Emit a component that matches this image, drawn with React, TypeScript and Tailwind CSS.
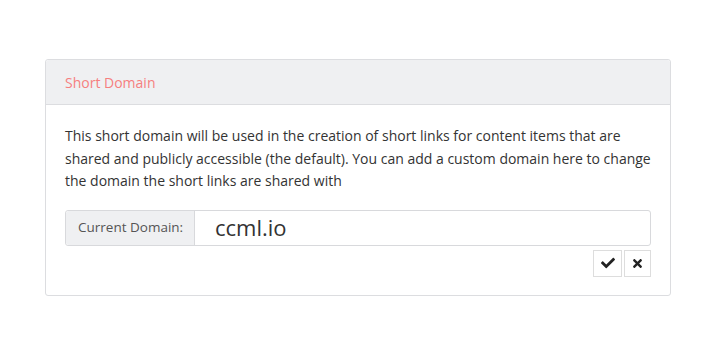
import { FaCheck, FaTimes } from "react-icons/fa"

function ShortDomainPanel() {
  return (
    <div className="rounded-[3px] border border-[#dcdde0] bg-white">
      <div className="h-[45px] flex items-center px-[19px] bg-[#eff0f2] border-b border-[#dcdde0] rounded-t-[3px]">
        <h3 className="text-[14px] text-[#f67f7f]">Short Domain</h3>
      </div>
      <div className="px-[19px] pt-[20px] pb-[18px]">
        <p className="text-[14px] leading-[22.5px] text-[#333]">
          This short domain will be used in the creation of short links for content items that are shared and publicly
          accessible (the default). You can add a custom domain here to change the domain the short links are shared with
        </p>
        <div className="mt-[17px] flex h-[36px] rounded-[3px] border border-[#d8d9dc]">
          <span className="w-[129px] shrink-0 flex items-center px-[12px] whitespace-nowrap bg-[#eff0f2] border-r border-[#d8d9dc] text-[13.5px] text-[#555] rounded-l-[3px]">
            Current Domain:
          </span>
          <input
            defaultValue="ccml.io"
            className="flex-1 min-w-0 px-[20px] text-[22px] text-[#333] outline-none rounded-r-[3px]"
          />
        </div>
        <div className="mt-[4px] flex justify-end gap-[2px]">
          <button className="w-[29px] h-[27px] flex items-center justify-center border border-[#ddd] bg-white text-[#222]">
            <FaCheck size={14} />
          </button>
          <button className="w-[27px] h-[27px] flex items-center justify-center border border-[#ddd] bg-white text-[#222]">
            <FaTimes size={13} />
          </button>
        </div>
      </div>
    </div>
  )
}

export default function App() {
  return (
    <div className="w-[720px] h-[360px] bg-white pt-[59px] pl-[45px] pr-[49px]" style={{ fontFamily: "'Open Sans', Lato, sans-serif" }}>
      <ShortDomainPanel />
    </div>
  )
}
